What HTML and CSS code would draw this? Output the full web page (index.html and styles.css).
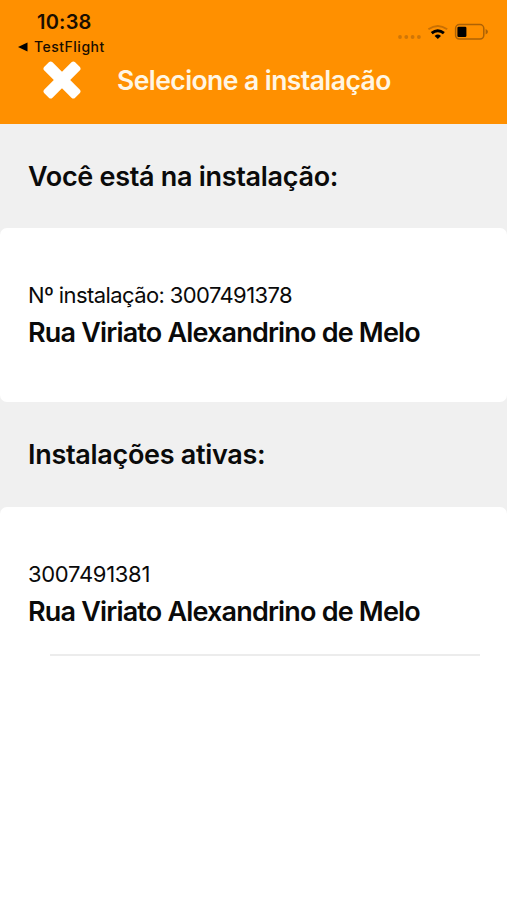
FILE: index.html
```html
<!DOCTYPE html>
<html lang="pt-BR">
<head>
<meta charset="utf-8">
<title>Selecione a instalação</title>
<link rel="stylesheet" href="styles.css">
</head>
<body>
<header class="top">
  <div class="status">
    <div class="status-left">
      <div class="time">10:38</div>
      <div class="back"><svg class="back-icon" viewBox="0 0 10 10"><path d="M0 5 9.5 0.4V9.6Z"/></svg><span class="back-label">TestFlight</span></div>
    </div>
    <svg class="status-icons" viewBox="0 0 92 20">
      <g fill="#cf7607"><circle cx="3" cy="15" r="1.9"/><circle cx="9.3" cy="15" r="1.9"/><circle cx="15.6" cy="15" r="1.9"/><circle cx="21.9" cy="15" r="1.9"/></g>
      <path d="M31.4 7.2Q40.8 0.6 50.2 7.2" fill="none" stroke="#c87004" stroke-width="2"/>
      <path d="M34.7 11.1Q40.8 6.2 46.9 11.1" fill="none" stroke="#000" stroke-width="2.9"/>
      <path d="M37.6 13.9Q40.8 11.2 44 13.9L40.8 17Z"/>
      <rect x="58.6" y="2.6" width="28.2" height="14.4" rx="3.8" fill="none" stroke="#ad6205" stroke-width="1.5"/>
      <rect x="60.4" y="4.7" width="9" height="10.2" rx="1.2"/>
      <path d="M88.6 7.1Q91 8 91 9.8T88.6 12.5Z" fill="#ad6205"/>
    </svg>
  </div>
  <div class="bar">
    <svg class="close" viewBox="-19 -19 38 38"><rect x="-21.8" y="-5.8" width="43.6" height="11.6" rx="2.6" transform="rotate(45)"/><rect x="-21.8" y="-5.8" width="43.6" height="11.6" rx="2.6" transform="rotate(-45)"/></svg>
    <h1 class="title">Selecione a instalação</h1>
  </div>
</header>
<main>
  <h2 class="heading heading-current">Você está na instalação:</h2>
  <section class="card">
    <p class="number number-current">Nº instalação: 3007491378</p>
    <p class="address">Rua Viriato Alexandrino de Melo</p>
  </section>
  <h2 class="heading heading-active">Instalações ativas:</h2>
  <section class="card card-list">
    <p class="number">3007491381</p>
    <p class="address">Rua Viriato Alexandrino de Melo</p>
    <hr class="divider">
  </section>
</main>
</body>
</html>
```
FILE: styles.css
```css
* { box-sizing: border-box; margin: 0; padding: 0; }
body {
  width: 507px; height: 900px; overflow: hidden;
  background: #f0f0f0; color: #0a0a0a;
  font-family: Inter, "Liberation Sans", sans-serif;
  display: flex; flex-direction: column;
  white-space: nowrap;
}
.top { height: 124px; background: #ff9000; flex: none; }
.status { height: 58px; display: flex; justify-content: space-between; padding: 10px 18px 0 18px; color: #1a0e00; }
.time { font-size: 20px; line-height: 25px; font-weight: 600; padding-left: 19px; letter-spacing: 0.2px; }
.back { display: flex; align-items: center; gap: 6px; height: 23px; font-size: 14px; font-weight: 500; letter-spacing: 0.5px; }
.back-icon { width: 10px; height: 10px; }
.status-icons { width: 92px; height: 20px; margin: 12px 0 0; flex: none; }
.bar { display: flex; align-items: center; height: 44px; padding-left: 43px; }
.close { width: 38px; height: 38px; fill: #fff; }
.title { margin-left: 36px; color: #fff6e4; font-size: 26.5px; line-height: 46px; font-weight: 600; letter-spacing: -0.56px; }
main { flex: 1; display: flex; flex-direction: column; }
.heading { height: 104px; line-height: 105px; padding-left: 28px; font-size: 27px; font-weight: 600; letter-spacing: -0.3px; }
.card { height: 174px; background: #fff; border-radius: 7px; padding: 49px 27px 0 28px; }
.number { font-size: 22px; line-height: 36px; letter-spacing: -0.3px; }
.number-current { letter-spacing: -0.6px; }
.address { font-size: 27px; line-height: 40px; font-weight: 600; letter-spacing: -0.82px; }
.heading-active { height: 105px; line-height: 105px; }
.card-list { flex: 1; border-radius: 7px 7px 0 0; }
.divider { border: 0; height: 2px; margin: 22px 0 0 22px; background: #ececec; }
```
